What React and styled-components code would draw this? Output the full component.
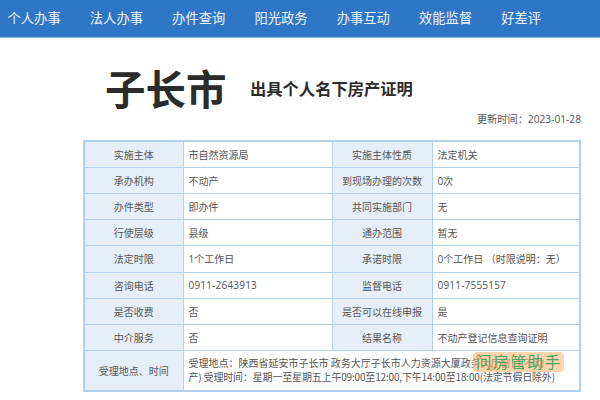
import React from 'react';
import styled, { createGlobalStyle } from 'styled-components';

const Global = createGlobalStyle`
  html, body { margin: 0; padding: 0; background: #fff; }
  body { width: 600px; height: 400px; overflow: hidden; font-family: "Noto Sans CJK SC", "Open Sans", sans-serif; }
`;
const Nav = styled.nav`
  height: 37px; box-sizing: content-box; background: #2f76c6; border-bottom: 1px solid #8dbbe6;
  display: flex; align-items: center; padding: 0 0 0 7.5px;
  gap: 28.3px;
`;
const NavItem = styled.span`
  width: 54px; color: #eef4fb; font-size: 13.3px; line-height: 18px; margin-bottom: 2px; white-space: nowrap;
`;
const Head = styled.header`
  display: flex; align-items: center; padding: 28px 0 0 105px; height: 46px;
`;
const City = styled.h1`
  margin: 0 0 3px; font-size: 40.5px; line-height: 43px; font-weight: 700; color: #2b2b2b; width: 145px;
`;
const Sub = styled.h2`
  margin: 0 0 1px; font-size: 16.3px; font-weight: 700; color: #2b2b2b; line-height: 23px;
`;
const Updated = styled.div`
  text-align: right; padding-right: 19px; height: 28px;
  font-size: 10.2px; line-height: 14px; color: #555;
`;
const Digits = styled.span`
  font-family: "Open Sans", sans-serif;
`;
const TableWrap = styled.div`
  position: relative; margin-left: 83px; width: 498px;
`;
const Table = styled.table`
  width: 498px; border-collapse: collapse; table-layout: fixed; border: 2px solid #b4d0ef;
  font-size: 10px; color: #555;
`;
const Row = styled.tr`
  height: ${(p) => (p.$tall ? '27px' : '26px')};
`;
const Label = styled.td`
  background: #e6eff9; border: 1px solid #b4d0ef; text-align: center; padding: 0; white-space: nowrap;
`;
const Value = styled.td`
  background: #fff; border: 1px solid #b4d0ef; padding: 0 0 0 5px; white-space: nowrap;
  font-family: "Open Sans", "Noto Sans CJK SC", sans-serif;
  letter-spacing: ${(p) => (p.$phone ? '0.2px' : '0')};
`;
const Multi = styled(Value)`
  line-height: 14px; height: 39px;
  font-family: "Noto Sans CJK SC", sans-serif;
`;
const Line = styled.span`
  display: block; letter-spacing: ${(p) => (p.$tight ? '-0.17px' : '0')};
`;
const Watermark = styled.div`
  position: absolute; right: 17px; bottom: 20px; width: 91px; height: 20px; border-radius: 4px;
  background: rgba(250, 185, 125, 0.62); color: #4aa55f; font-size: 15.5px; line-height: 19px;
  letter-spacing: 1.7px; padding-left: 3px; box-sizing: border-box; white-space: nowrap;
`;
const Dots = styled.svg`
  position: absolute; left: 0; top: 0;
`;

const rows = [
  ['实施主体', '市自然资源局', '实施主体性质', '法定机关'],
  ['承办机构', '不动产', '到现场办理的次数', '0次'],
  ['办件类型', '即办件', '共同实施部门', '无'],
  ['行使层级', '县级', '通办范围', '暂无'],
  ['法定时限', '1个工作日', '承诺时限', '0个工作日 （时限说明：无）'],
  ['咨询电话', '0911-2643913', '监督电话', '0911-7555157', true],
  ['是否收费', '否', '是否可以在线申报', '是'],
  ['中介服务', '否', '结果名称', '不动产登记信息查询证明'],
];

export default function App() {
  return (
    <>
      <Global />
      <Nav>
        {['个人办事', '法人办事', '办件查询', '阳光政务', '办事互动', '效能监督', '好差评'].map((t) => (
          <NavItem key={t}>{t}</NavItem>
        ))}
      </Nav>
      <Head>
        <City>子长市</City>
        <Sub>出具个人名下房产证明</Sub>
      </Head>
      <Updated>更新时间：<Digits>2023-01-28</Digits></Updated>
      <TableWrap>
        <Table>
          <colgroup>
            <col style={{ width: 99 }} />
            <col style={{ width: 149 }} />
            <col style={{ width: 100 }} />
            <col />
          </colgroup>
          <tbody>
            {rows.map((r) => (
              <Row key={r[0]} $tall={r[0] === '法定时限'}>
                <Label>{r[0]}</Label>
                <Value $phone={r[4]}>{r[1]}</Value>
                <Label>{r[2]}</Label>
                <Value $phone={r[4]}>{r[3]}</Value>
              </Row>
            ))}
            <tr>
              <Label>受理地点、时间</Label>
              <Multi colSpan={3}>
                <Line>受理地点：陕西省延安市子长市 政务大厅子长市人力资源大厦政务大厅窗口(不动</Line>
                <Line $tight>产) 受理时间：星期一至星期五上午09:00至12:00,下午14:00至18:00(法定节假日除外)</Line>
              </Multi>
            </tr>
          </tbody>
        </Table>
        <Watermark>
          问房管助手
          <Dots width="91" height="20" viewBox="0 0 91 20">
            <circle cx="6" cy="5" r="2.2" fill="none" stroke="#f08a5d" />
            <circle cx="18" cy="16" r="2.2" fill="none" stroke="#f08a5d" />
          </Dots>
        </Watermark>
      </TableWrap>
    </>
  );
}
